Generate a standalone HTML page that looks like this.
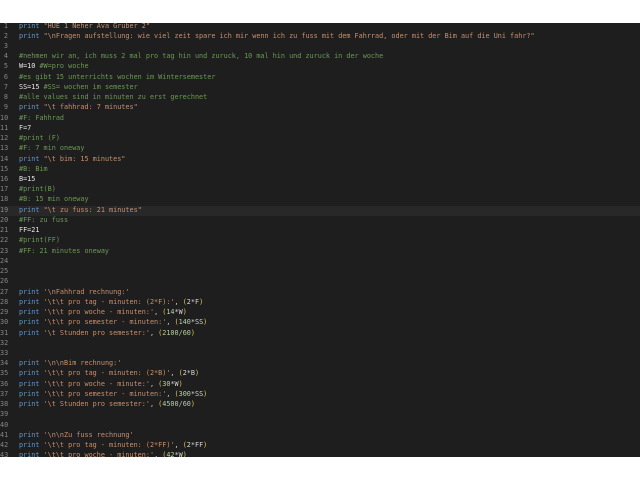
<!DOCTYPE html><html><head><style>
body{margin:0;background:#fff;width:640px;height:480px;overflow:hidden}
#ed{position:absolute;left:0;top:23px;width:640px;height:434px;background:#1e1e1e;overflow:hidden}
#in{position:absolute;top:-1.5px;left:0;width:640px}
.l{height:10.24px;line-height:10.24px;font:6.8px "DejaVu Sans Mono","Liberation Mono",monospace;white-space:pre;color:#d4d4d4;position:relative}
.n{position:absolute;left:0;width:8px;text-align:right;color:#858585}
.c{position:absolute;left:19px}
.h{background:#282828}
.k{color:#5f97cf}.s{color:#c8906f}.m{color:#6a9955}.d{color:#b5cea8}.p{color:#e8c74a}.w{color:#e6e6e6}
</style></head><body><div id="ed"><div id="in">
<div class="l"><span class="n">1</span><span class="c"><span class="k">print</span> <span class="s">"HUE 1 Neher Ava Gruber 2"</span></span></div>
<div class="l"><span class="n">2</span><span class="c"><span class="k">print</span> <span class="s">"\nFragen aufstellung: wie viel zeit spare ich mir wenn ich zu fuss mit dem Fahrrad, oder mit der Bim auf die Uni fahr?"</span></span></div>
<div class="l"><span class="n">3</span></div>
<div class="l"><span class="n">4</span><span class="c m">#nehmen wir an, ich muss 2 mal pro tag hin und zuruck, 10 mal hin und zuruck in der woche</span></div>
<div class="l"><span class="n">5</span><span class="c"><span class="w">W=10</span> <span class="m">#W=pro woche</span></span></div>
<div class="l"><span class="n">6</span><span class="c m">#es gibt 15 unterrichts wochen im Wintersemester</span></div>
<div class="l"><span class="n">7</span><span class="c"><span class="w">SS=15</span> <span class="m">#SS= wochen im semester</span></span></div>
<div class="l"><span class="n">8</span><span class="c m">#alle values sind in minuten zu erst gerechnet</span></div>
<div class="l"><span class="n">9</span><span class="c"><span class="k">print</span> <span class="s">"\t fahhrad: 7 minutes"</span></span></div>
<div class="l"><span class="n">10</span><span class="c m">#F: Fahhrad</span></div>
<div class="l"><span class="n">11</span><span class="c w">F=7</span></div>
<div class="l"><span class="n">12</span><span class="c m">#print (F)</span></div>
<div class="l"><span class="n">13</span><span class="c m">#F: 7 min oneway</span></div>
<div class="l"><span class="n">14</span><span class="c"><span class="k">print</span> <span class="s">"\t bim: 15 minutes"</span></span></div>
<div class="l"><span class="n">15</span><span class="c m">#B: Bim</span></div>
<div class="l"><span class="n">16</span><span class="c w">B=15</span></div>
<div class="l"><span class="n">17</span><span class="c m">#print(B)</span></div>
<div class="l"><span class="n">18</span><span class="c m">#B: 15 min oneway</span></div>
<div class="l h"><span class="n">19</span><span class="c"><span class="k">print</span> <span class="s">"\t zu fuss: 21 minutes"</span></span></div>
<div class="l"><span class="n">20</span><span class="c m">#FF: zu fuss</span></div>
<div class="l"><span class="n">21</span><span class="c w">FF=21</span></div>
<div class="l"><span class="n">22</span><span class="c m">#print(FF)</span></div>
<div class="l"><span class="n">23</span><span class="c m">#FF: 21 minutes oneway</span></div>
<div class="l"><span class="n">24</span></div>
<div class="l"><span class="n">25</span></div>
<div class="l"><span class="n">26</span></div>
<div class="l"><span class="n">27</span><span class="c"><span class="k">print</span> <span class="s">'\nFahhrad rechnung:'</span></span></div>
<div class="l"><span class="n">28</span><span class="c"><span class="k">print</span> <span class="s">'\t\t pro tag - minuten: (2*F):'</span>, <span class="p">(</span>2*F<span class="p">)</span></span></div>
<div class="l"><span class="n">29</span><span class="c"><span class="k">print</span> <span class="s">'\t\t pro woche - minuten:'</span>, <span class="p">(</span><span class="d">14</span>*W<span class="p">)</span></span></div>
<div class="l"><span class="n">30</span><span class="c"><span class="k">print</span> <span class="s">'\t\t pro semester - minuten:'</span>, <span class="p">(</span><span class="d">140</span>*SS<span class="p">)</span></span></div>
<div class="l"><span class="n">31</span><span class="c"><span class="k">print</span> <span class="s">'\t Stunden pro semester:'</span>, <span class="p">(</span><span class="d">2100/60</span><span class="p">)</span></span></div>
<div class="l"><span class="n">32</span></div>
<div class="l"><span class="n">33</span></div>
<div class="l"><span class="n">34</span><span class="c"><span class="k">print</span> <span class="s">'\n\nBim rechnung:'</span></span></div>
<div class="l"><span class="n">35</span><span class="c"><span class="k">print</span> <span class="s">'\t\t pro tag - minuten: (2*B)'</span>, <span class="p">(</span>2*B<span class="p">)</span></span></div>
<div class="l"><span class="n">36</span><span class="c"><span class="k">print</span> <span class="s">'\t\t pro woche - minute:'</span>, <span class="p">(</span><span class="d">30</span>*W<span class="p">)</span></span></div>
<div class="l"><span class="n">37</span><span class="c"><span class="k">print</span> <span class="s">'\t\t pro semester - minuten:'</span>, <span class="p">(</span><span class="d">300</span>*SS<span class="p">)</span></span></div>
<div class="l"><span class="n">38</span><span class="c"><span class="k">print</span> <span class="s">'\t Stunden pro semester:'</span>, <span class="p">(</span><span class="d">4500/60</span><span class="p">)</span></span></div>
<div class="l"><span class="n">39</span></div>
<div class="l"><span class="n">40</span></div>
<div class="l"><span class="n">41</span><span class="c"><span class="k">print</span> <span class="s">'\n\nZu fuss rechnung'</span></span></div>
<div class="l"><span class="n">42</span><span class="c"><span class="k">print</span> <span class="s">'\t\t pro tag - minuten: (2*FF)'</span>, <span class="p">(</span>2*FF<span class="p">)</span></span></div>
<div class="l"><span class="n">43</span><span class="c"><span class="k">print</span> <span class="s">'\t\t pro woche - minuten:'</span>, <span class="p">(</span><span class="d">42</span>*W<span class="p">)</span></span></div>
</div></div></body></html>
